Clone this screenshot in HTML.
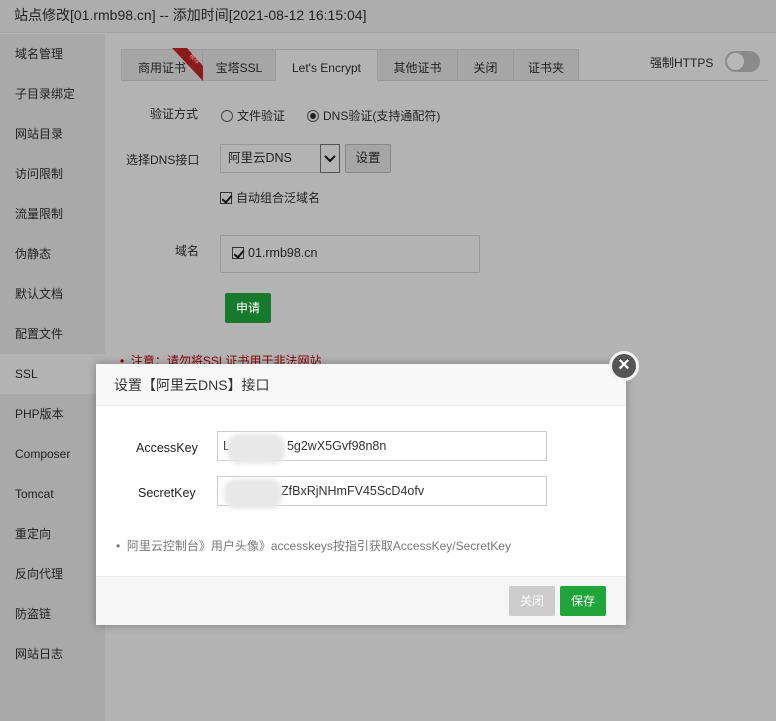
<!DOCTYPE html>
<html><head><meta charset="utf-8">
<style>
*{margin:0;padding:0;box-sizing:border-box}
body{width:776px;height:721px;overflow:hidden;background:#b3b3b3;font-family:"Liberation Sans","Noto Sans CJK SC",sans-serif;font-size:12px;color:#222;position:relative}
.title{position:absolute;left:0;top:0;width:776px;height:33px;background:#adadad;border-bottom:1px solid #a3a3a3;font-size:14px;line-height:30px;padding-left:14px;color:#222}
.side{position:absolute;left:0;top:34px;width:105px;height:687px;background:#a9a9a9}
.side div{height:40px;line-height:40px;padding-left:15px;font-size:12px;color:#222}
.side .act{background:#b3b3b3}
.tabs{position:absolute;left:121px;top:49px;height:32px;border-bottom:1px solid #999;width:647px}
.tab{position:absolute;top:0;height:32px;border:1px solid #9a9a9a;background:#a6a6a6;line-height:36px;text-align:center;font-size:12px;color:#222}
.tab.a{background:#b3b3b3;border-bottom-color:#b3b3b3;height:33px}
.lbl{position:absolute;font-size:12px;color:#222}
.modal{position:absolute;left:96px;top:364px;width:530px;height:261px;background:#fff;box-shadow:0 0 8px rgba(0,0,0,.3)}
.mh{height:42px;background:#f8f8f8;border-bottom:1px solid #eee;font-size:14px;line-height:42px;padding-left:18px;color:#333}
.mf{position:absolute;left:0;bottom:0;width:530px;height:49px;background:#f6f6f6;border-top:1px solid #eee}
.inp{position:absolute;left:121px;width:330px;height:30px;border:1px solid #ccc;font-size:12.5px;line-height:28px;padding-left:5px;color:#333}
.blur{position:absolute;background:#e8e8e8;border-radius:12px;filter:blur(2px)}
.btn{position:absolute;height:30px;line-height:30px;text-align:center;color:#fff;border-radius:2px;font-size:12px}
.cb{display:inline-block;width:12px;height:12px;border:1px solid #333;vertical-align:-2px;position:relative;margin-right:4px}
.cb:after{content:"";position:absolute;left:3px;top:0px;width:4px;height:8px;border:solid #111;border-width:0 2px 2px 0;transform:rotate(40deg)}
.rad{display:inline-block;width:12px;height:12px;border:1px solid #444;border-radius:50%;vertical-align:-2px;margin-right:4px;position:relative}
.rad.on:after{content:"";position:absolute;left:2px;top:2px;width:6px;height:6px;border-radius:50%;background:#222}
</style></head><body>
<div class="title">站点修改[01.rmb98.cn] -- 添加时间[2021-08-12 16:15:04]</div>
<div class="side">
<div>域名管理</div><div>子目录绑定</div><div>网站目录</div><div>访问限制</div><div>流量限制</div><div>伪静态</div><div>默认文档</div><div>配置文件</div><div class="act" style="width:200px">SSL</div><div>PHP版本</div><div>Composer</div><div>Tomcat</div><div>重定向</div><div>反向代理</div><div>防盗链</div><div>网站日志</div>
</div>
<div class="tabs">
<div class="tab" style="left:0;width:82px">商用证书</div>
<div class="tab" style="left:81px;width:74px">宝塔SSL</div>
<div class="tab a" style="left:154px;width:103px">Let's Encrypt</div>
<div class="tab" style="left:256px;width:81px">其他证书</div>
<div class="tab" style="left:336px;width:57px">关闭</div>
<div class="tab" style="left:392px;width:66px">证书夹</div>
</div>
<svg style="position:absolute;left:0;top:0" width="776" height="100"><polygon points="172,48 187,48 203,66 203,81" fill="#8b1a1a"/><text x="189" y="56" font-size="6" fill="#d99" transform="rotate(45 189 56)" font-family="Noto Sans CJK SC">推荐</text></svg>
<div class="lbl" style="left:650px;top:54px">强制HTTPS</div>
<div style="position:absolute;left:725px;top:51px;width:35px;height:21px;border-radius:11px;background:#8a8a8a"><div style="position:absolute;left:2px;top:2px;width:17px;height:17px;border-radius:50%;background:#b8b8b8"></div></div>
<div class="lbl" style="left:150px;top:105px">验证方式</div>
<div class="lbl" style="left:221px;top:107px"><span class="rad"></span>文件验证</div>
<div class="lbl" style="left:307px;top:107px"><span class="rad on"></span>DNS验证(支持通配符)</div>
<div class="lbl" style="left:126px;top:151px">选择DNS接口</div>
<div style="position:absolute;left:220px;top:144px;width:120px;height:29px;border:1px solid #999;font-size:12.5px;line-height:27px;padding-left:7px">阿里云DNS<div style="position:absolute;right:-1px;top:-1px;width:20px;height:29px;border:1px solid #555"><svg width="18" height="27"><path d="M4 11 L9 16 L14 11" stroke="#111" stroke-width="2" fill="none"/></svg></div></div>
<div style="position:absolute;left:345px;top:144px;width:46px;height:29px;border:1px solid #888;border-radius:2px;background:#a6a6a6;text-align:center;line-height:27px;font-size:12.5px">设置</div>
<div class="lbl" style="left:220px;top:189px"><span class="cb"></span>自动组合泛域名</div>
<div class="lbl" style="left:175px;top:242px">域名</div>
<div style="position:absolute;left:220px;top:235px;width:260px;height:38px;border:1px solid #999;border-radius:2px;padding:10px 0 0 11px;font-size:12.5px"><span class="cb"></span>01.rmb98.cn</div>
<div class="btn" style="left:225px;top:293px;width:46px;background:#167a2c">申请</div>
<div class="lbl" style="left:120px;top:352px;color:#880000">• &nbsp;注意：请勿将SSL证书用于非法网站</div>
<div class="modal">
<div class="mh">设置【阿里云DNS】接口</div>
<div class="lbl" style="left:40px;top:77px;font-size:12.5px">AccessKey</div>
<div class="inp" style="top:67px">L<span style="padding-left:57px">5g2wX5Gvf98n8n</span></div>
<div class="blur" style="left:131px;top:70px;width:58px;height:30px"></div>
<div class="lbl" style="left:42px;top:122px;font-size:12.5px">SecretKey</div>
<div class="inp" style="top:112px"><span style="padding-left:58px">ZfBxRjNHmFV45ScD4ofv</span></div>
<div class="blur" style="left:128px;top:115px;width:58px;height:30px"></div>
<div class="lbl" style="left:20px;top:173px;color:#777;font-size:12px">• &nbsp;阿里云控制台》用户头像》accesskeys按指引获取AccessKey/SecretKey</div>
<div class="mf">
<div class="btn" style="left:413px;top:9px;width:46px;background:#ccc">关闭</div>
<div class="btn" style="left:464px;top:9px;width:46px;background:#20a53a">保存</div>
</div>
</div>
<div style="position:absolute;left:609px;top:351px;width:30px;height:30px;border-radius:50%;background:#555;border:3px solid #f3f3f3;color:#fff;text-align:center;line-height:22px;font-size:20px;font-weight:bold">&#215;</div>
</body></html>
